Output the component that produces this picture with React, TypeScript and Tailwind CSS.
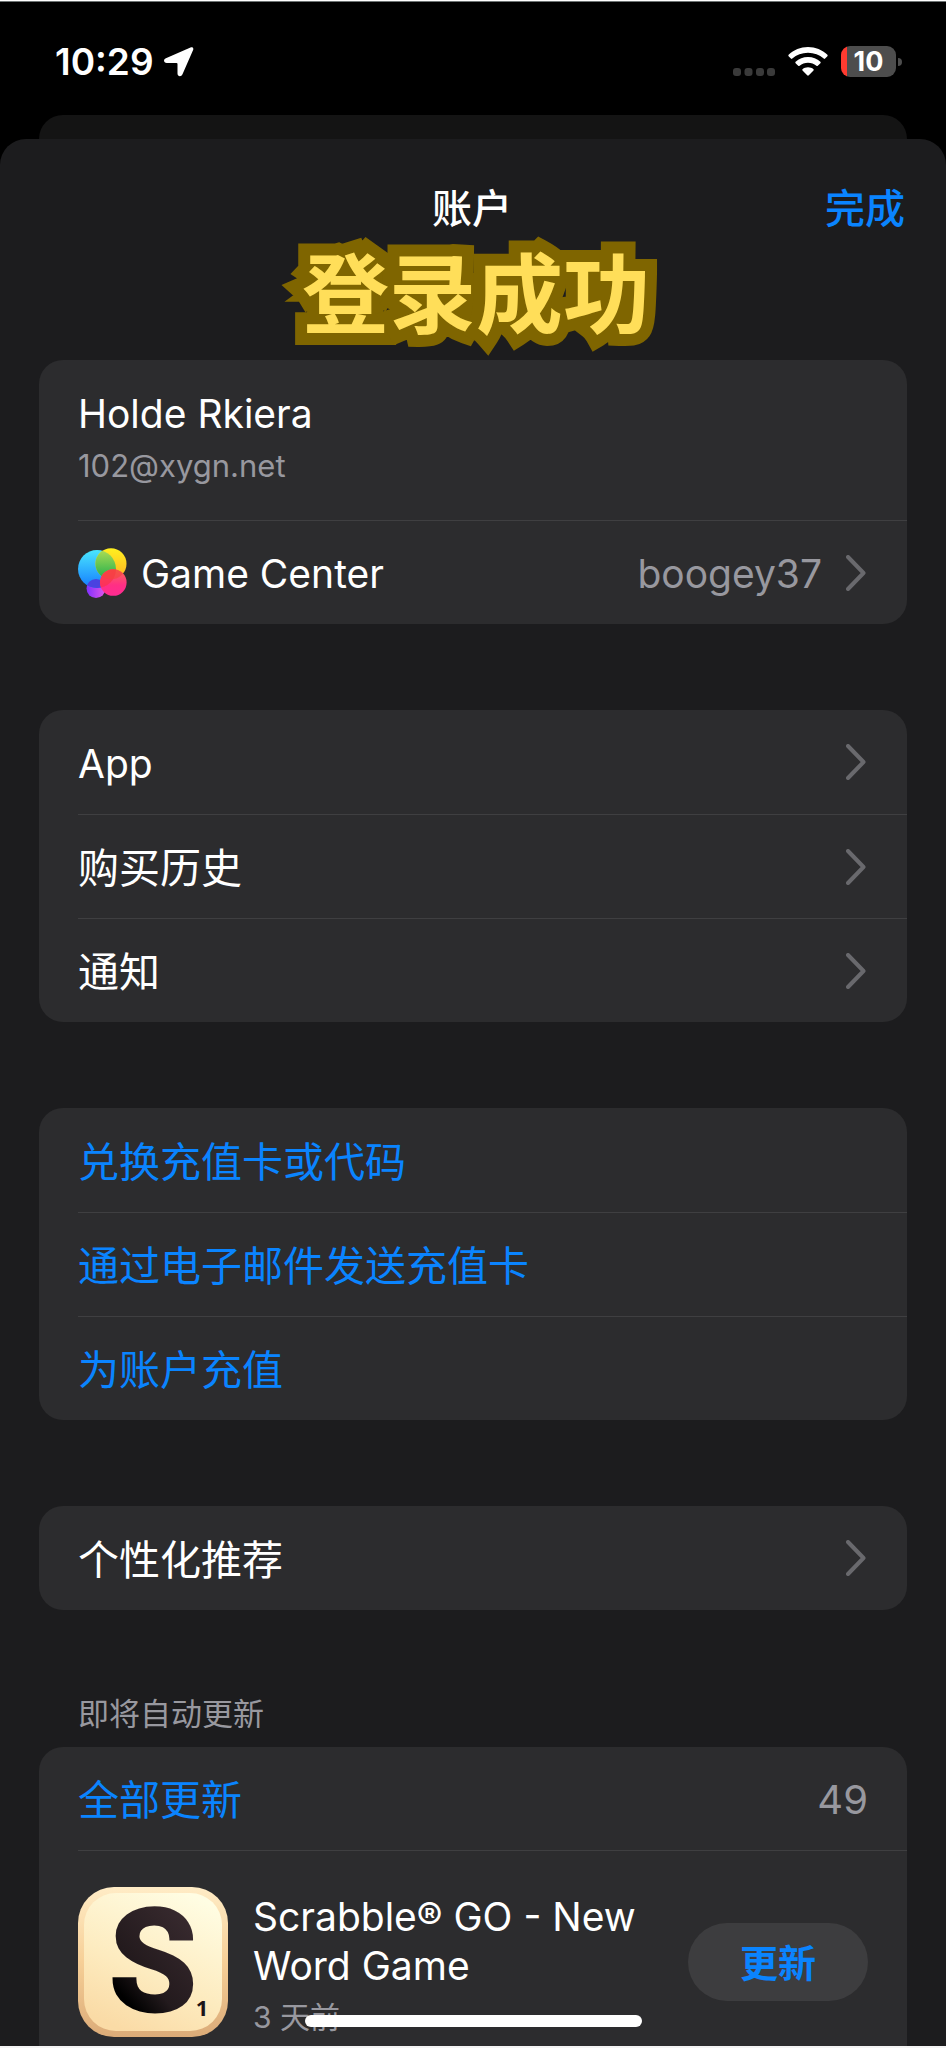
import React from "react";

const fonts = "font-['Inter','Noto_Sans_CJK_SC',sans-serif]";

function Chevron() {
  return (
    <svg className="mr-[2px] ml-6 h-9 w-5 shrink-0" viewBox="0 0 20 36" fill="none" aria-hidden="true">
      <path d="M2 2 L17.5 18 L2 34" stroke="#69696d" strokeWidth="4" strokeLinecap="round" strokeLinejoin="round" />
    </svg>
  );
}

function Card({ children }: { children: React.ReactNode }) {
  return <section className="overflow-hidden rounded-3xl bg-[#2c2c2e] pl-[39px]">{children}</section>;
}

function Row({ label, value, link, first, latin, icon }: {
  label: string;
  value?: string;
  link?: boolean;
  first?: boolean;
  latin?: boolean;
  icon?: React.ReactNode;
}) {
  return (
    <button
      type="button"
      className={`flex h-[104px] w-full items-center pr-[39px] text-left leading-[52px] ${latin ? "text-[39px]" : "text-[41px]"} ${first ? "" : "border-t border-[#3f3f41]"} ${link ? "text-[#0a84ff]" : "text-white"}`}
    >
      {icon}
      <span className="flex-1 pt-[3px]">{label}</span>
      {value && <span className="pt-[3px] text-[#98989f]">{value}</span>}
      {!link && <Chevron />}
    </button>
  );
}

function GameCenterIcon() {
  return (
    <svg className="mr-[14px] h-[50px] w-[49px] shrink-0" viewBox="0 0 49 50" aria-hidden="true">
      <defs>
        <linearGradient id="gcBlue" x1="0" y1="0" x2="0" y2="1">
          <stop offset="0" stopColor="#4ae6fd" />
          <stop offset="1" stopColor="#147cff" />
        </linearGradient>
        <linearGradient id="gcYellow" x1="0" y1="0" x2="0" y2="1">
          <stop offset="0" stopColor="#fff01f" />
          <stop offset="1" stopColor="#ffb125" />
        </linearGradient>
        <linearGradient id="gcGreen" x1="0" y1="0" x2="0" y2="1">
          <stop offset="0" stopColor="#b4df55" />
          <stop offset="1" stopColor="#1fae4d" />
        </linearGradient>
        <linearGradient id="gcPink" x1="0" y1="0" x2="0" y2="1">
          <stop offset="0" stopColor="#fb6a55" />
          <stop offset="0.6" stopColor="#ff2f85" />
          <stop offset="1" stopColor="#ff2b92" />
        </linearGradient>
        <linearGradient id="gcPurple" x1="0" y1="0" x2="1" y2="0">
          <stop offset="0" stopColor="#8030ff" />
          <stop offset="1" stopColor="#e156e8" />
        </linearGradient>
        <clipPath id="gcBlueClip"><circle cx="19" cy="21" r="19" /></clipPath>
        <clipPath id="gcYellowClip"><circle cx="33" cy="15.7" r="15.5" /></clipPath>
      </defs>
      <circle cx="18" cy="40.500" r="9.500" fill="url(#gcPurple)" />
      <circle cx="19" cy="21" r="19" fill="url(#gcBlue)" />
      <circle cx="33" cy="15.700" r="15.500" fill="url(#gcYellow)" />
      <g clipPath="url(#gcBlueClip)">
        <circle cx="33" cy="15.700" r="15.500" fill="url(#gcGreen)" />
        <circle cx="18" cy="40.500" r="9.500" fill="#4a42e0" />
      </g>
      <circle cx="35.300" cy="34.500" r="13.300" fill="url(#gcPink)" />
      <g clipPath="url(#gcBlueClip)">
        <circle cx="35.300" cy="34.500" r="13.300" fill="#fb3350" fillOpacity="0.8" />
      </g>
      <g clipPath="url(#gcYellowClip)">
        <circle cx="35.300" cy="34.500" r="13.300" fill="#f4443c" fillOpacity="0.6" />
      </g>
    </svg>
  );
}

function StatusBar() {
  return (
    <div className="border-t border-white">
      <div className="flex h-[114px] items-center justify-between border-t border-[#6f7575] pt-[6px] pr-11 pl-[55px]">
        <div className="flex items-center gap-[10px] text-[37px] leading-[46px] font-semibold text-white">
          <span>10:29</span>
          <svg className="h-[30px] w-[30px]" viewBox="0 0 30 30" fill="#fff" aria-hidden="true">
            <path d="M26.500 .5C28.500-.4 29.900 1 29.100 3L18.500 27.300C17.300 30.200 13.500 29.600 13.500 26.500V17Q13.500 16 12.500 16H2.800C-.5 16-.9 12.400 1.900 11.200Z" />
          </svg>
        </div>
        <div className="flex items-center">
          <svg className="mr-3 h-[30px] w-[43px]" viewBox="0 0 43 30" fill="#3a3a3a" aria-hidden="true">
            <rect x="0" y="21" width="8" height="8" rx="3" />
            <rect x="11.500" y="21" width="8" height="8" rx="3" />
            <rect x="23" y="21" width="8" height="8" rx="3" />
            <rect x="34" y="21" width="8" height="8" rx="3" />
          </svg>
          <svg className="mr-[13px] h-[30px] w-10" viewBox="0 0 40 30" fill="#fff" aria-hidden="true">
            <path d="M20 0C12.500 0 5.700 3 .6 7.800Q0 8.500.6 9.200L2.900 11.600Q3.600 12.200 4.300 11.600C8.500 7.800 14 5.700 20 5.700S31.500 7.800 35.700 11.600Q36.400 12.200 37.100 11.600L39.400 9.200Q40 8.500 39.400 7.800C34.300 3 27.500 0 20 0Z" />
            <path d="M20 10C15.200 10 10.900 11.800 7.600 14.800Q6.900 15.500 7.600 16.200L10.200 18.800Q10.900 19.400 11.600 18.800C13.900 16.800 16.800 15.700 20 15.700S26.100 16.800 28.400 18.800Q29.100 19.400 29.800 18.800L32.400 16.200Q33.100 15.500 32.400 14.800C29.100 11.800 24.800 10 20 10Z" />
            <path d="M20 20.300C17.900 20.300 16 21 14.500 22.200Q13.900 22.800 14.500 23.400L19.200 28.300Q20 29.100 20.800 28.300L25.500 23.400Q26.100 22.800 25.500 22.200C24 21 22.100 20.300 20 20.300Z" />
          </svg>
          <div className="flex h-[31px] w-[55px] items-center justify-center overflow-hidden rounded-[9px] bg-[linear-gradient(90deg,#ff3b30_6px,#4d4d4d_6px)] text-[27px] leading-[31px] font-bold text-white">
            10
          </div>
          <div className="ml-[2px] h-2 w-1 rounded-r-full bg-[#4d4d4d]" />
        </div>
      </div>
    </div>
  );
}

function ScrabbleIcon() {
  return (
    <svg className="h-[150px] w-[150px] shrink-0" viewBox="0 0 150 150" role="img" aria-label="Scrabble GO">
      <defs>
        <linearGradient id="rim" x1="0" y1="0" x2="0" y2="1">
          <stop offset="0" stopColor="#ffecc6" />
          <stop offset="0.5" stopColor="#f6cf97" />
          <stop offset="1" stopColor="#dbab78" />
        </linearGradient>
        <linearGradient id="face" x1="0.75" y1="0" x2="0.3" y2="1">
          <stop offset="0" stopColor="#fffde3" />
          <stop offset="0.6" stopColor="#fdebbf" />
          <stop offset="1" stopColor="#fadba6" />
        </linearGradient>
        <linearGradient id="ink" x1="0.8" y1="0" x2="0.2" y2="1">
          <stop offset="0" stopColor="#3d2e33" />
          <stop offset="0.6" stopColor="#231a1d" />
          <stop offset="0.8" stopColor="#000" />
        </linearGradient>
      </defs>
      <rect width="150" height="150" rx="36" fill="url(#rim)" />
      <rect x="6" y="6" width="138" height="138" rx="32" fill="url(#face)" />
      <text x="75" y="124" textAnchor="middle" fontFamily="Roboto" fontWeight="700" fontSize="142" fill="url(#ink)" stroke="url(#ink)" strokeWidth="3">S</text>
      <text x="124" y="129" textAnchor="middle" fontFamily="Open Sans" fontWeight="700" fontSize="22" fill="#1d1518">1</text>
    </svg>
  );
}

export default function App() {
  return (
    <div className={`relative flex min-h-screen flex-col bg-black ${fonts}`} lang="zh-CN">
      <StatusBar />
      <div className="mx-[39px] h-6 rounded-t-3xl bg-[#141414]" />
      <main className="flex-1 rounded-t-[26px] bg-[#1c1c1e] px-[39px]">
        <header className="grid h-[137px] grid-cols-3 items-center pt-[3px] pr-[2px] text-[40px] leading-[52px]">
          <h1 className="col-start-2 text-center font-medium text-white">账户</h1>
          <button type="button" className="justify-self-end font-medium text-[#0a84ff]">完成</button>
        </header>
        <p className="-mt-6 h-[108px] pl-[6px] text-center text-[87px] leading-[88px] font-bold text-[#ffde59] [-webkit-text-stroke:24px_#7f6500] [paint-order:stroke_fill]">
          登录成功
        </p>

        <div className="flex flex-col gap-[86px]">
          <Card>
            <div className="h-[160px] pt-7">
              <p className="text-[39px] leading-[52px] text-white">Holde Rkiera</p>
              <p className="text-[31px] leading-[52px] text-[#98989f]">102@xygn.net</p>
            </div>
            <Row label="Game Center" value="boogey37" latin icon={<GameCenterIcon />} />
          </Card>
          <Card>
            <Row label="App" first latin />
            <Row label="购买历史" />
            <Row label="通知" />
          </Card>
          <Card>
            <Row label="兑换充值卡或代码" first link />
            <Row label="通过电子邮件发送充值卡" link />
            <Row label="为账户充值" link />
          </Card>
          <Card>
            <Row label="个性化推荐" first />
          </Card>
        </div>

        <h2 className="mt-[83px] mb-3 pl-[39px] text-[31px] leading-[42px] text-[#98989f]">即将自动更新</h2>
        <section className="rounded-t-3xl bg-[#2c2c2e] pl-[39px]">
          <div className="flex h-[103px] items-center justify-between pt-[3px] pr-[39px] leading-[52px]">
            <button type="button" className="text-[41px] text-[#0a84ff]">全部更新</button>
            <span className="text-[40px] text-[#98989f]">49</span>
          </div>
          <article className="flex h-[196px] items-start gap-[25px] border-t border-[#3f3f41] pt-9 pr-[39px]">
            <ScrabbleIcon />
            <div className="flex-1 pt-[5px]">
              <h3 className="text-[39px] leading-[49px] text-white">Scrabble® GO - New<br />Word Game</h3>
              <p className="text-[30px] leading-[54px] text-[#98989f]">3 天前</p>
            </div>
            <button type="button" className="mt-9 h-[78px] w-[180px] rounded-full bg-[#3d3d3f] pt-[3px] text-[38px] font-bold text-[#0a84ff]">
              更新
            </button>
          </article>
        </section>
      </main>
      <div className="absolute inset-x-0 bottom-[21px] flex justify-center">
        <div className="h-3 w-[337px] rounded-full bg-white" />
      </div>
      <div className="h-[2px] bg-[#f4f4f4]" />
    </div>
  );
}
